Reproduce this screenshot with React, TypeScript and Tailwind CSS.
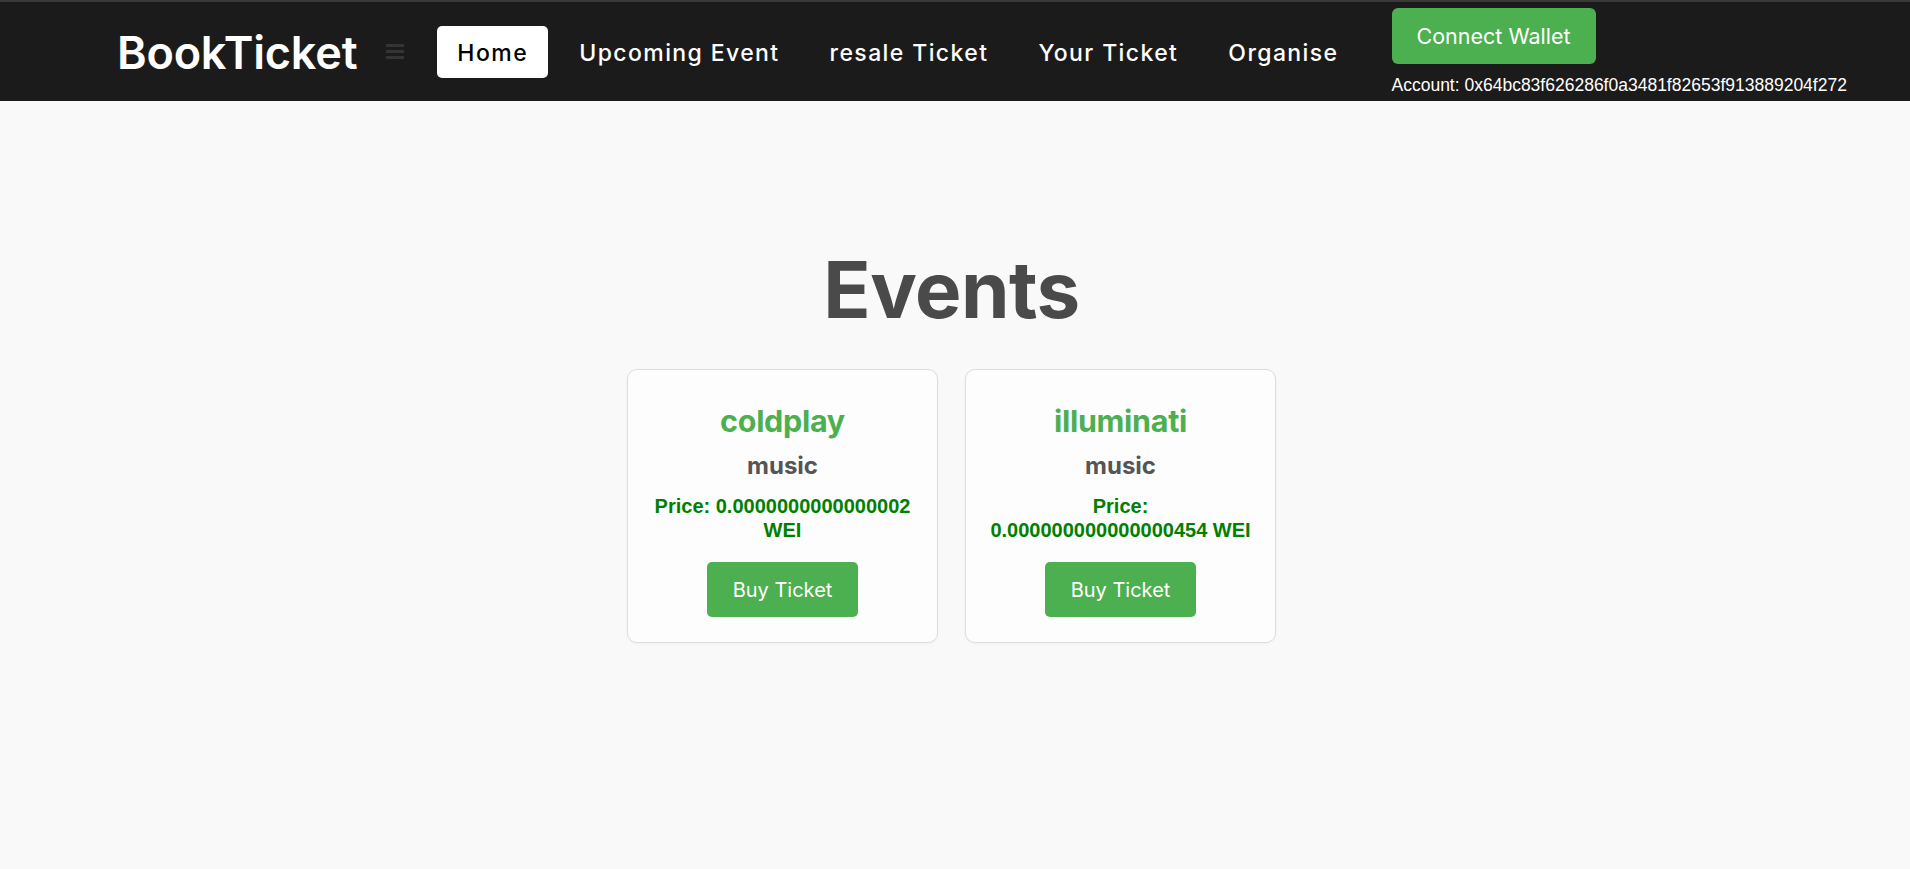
import React from "react";

type EventItem = {
  name: string;
  category: string;
  price: string;
};

const events: EventItem[] = [
  { name: "coldplay", category: "music", price: "0.0000000000000002" },
  { name: "illuminati", category: "music", price: "0.000000000000000454" },
];

const links = ["Upcoming Event", "resale Ticket", "Your Ticket", "Organise"];

function Navbar() {
  return (
    <nav className="flex h-[101px] items-center border-t-2 border-[#3a3a3a] bg-[#1b1b1b] pl-[117px] font-['Inter',sans-serif]">
      <span className="pt-[2px] text-[45px] font-semibold leading-none tracking-[-0.2px] text-white">BookTicket</span>

      <svg className="ml-[29px]" width="18" height="17" viewBox="0 0 18 17">
        <rect x="0" y="1" width="18" height="3" fill="#343434" />
        <rect x="0" y="7" width="18" height="3" fill="#343434" />
        <rect x="0" y="13" width="18" height="3" fill="#343434" />
      </svg>

      <ul className="ml-[33px] flex items-center gap-3">
        <li>
          <a className="flex h-[52px] items-center rounded-[5px] bg-white px-5 pt-[3px] text-[23px] font-medium tracking-[1.5px] text-black">
            Home
          </a>
        </li>
        {links.map((l) => (
          <li key={l}>
            <a className="flex h-[52px] items-center px-[19px] pt-[3px] text-[23px] font-medium tracking-[1.4px] text-white">
              {l}
            </a>
          </li>
        ))}
      </ul>

      <div className="ml-[34px] flex flex-col items-start gap-[11px]">
        <button className="h-[56px] rounded-[6px] bg-[#4caf50] px-[25px] text-[21.5px] text-white">Connect Wallet</button>
        <p className="font-['Liberation_Sans',Arial,sans-serif] text-[17.5px] leading-[20px] text-white">
          Account: 0x64bc83f626286f0a3481f82653f913889204f272
        </p>
      </div>
    </nav>
  );
}

function EventCard({ e }: { e: EventItem }) {
  return (
    <div className="flex w-[311px] flex-col items-center rounded-[10px] border border-[#dddddd] bg-[#fdfdfd] px-5 pb-[25px] pt-[33px] text-center shadow-[0_1px_3px_rgba(0,0,0,0.04)]">
      <h2 className="text-[30.5px] font-bold leading-[36px] tracking-[-0.3px] text-[#4caf50]">{e.name}</h2>
      <h3 className="mt-3 text-[24px] font-bold leading-[29px] text-[#555555]">{e.category}</h3>
      <p className="mt-[15px] font-['Liberation_Sans',Arial,sans-serif] text-[20px] font-bold leading-[23.5px] text-[#008000]">
        Price: {e.price} WEI
      </p>
      <button className="mt-5 h-[55px] rounded-[5px] bg-[#4caf50] px-[26px] text-[20px] text-white">Buy Ticket</button>
    </div>
  );
}

export default function App() {
  return (
    <div className="min-h-[869px] bg-[#f9f9f9] font-['Inter',sans-serif]">
      <Navbar />
      <main className="flex flex-col items-center pr-[7px] pt-[150px]">
        <h1 className="text-[78px] font-bold leading-none tracking-[-0.5px] text-[#4a4a4a]">Events</h1>
        <div className="mt-[40px] flex gap-[27px]">
          {events.map((e) => (
            <EventCard key={e.name} e={e} />
          ))}
        </div>
      </main>
    </div>
  );
}
